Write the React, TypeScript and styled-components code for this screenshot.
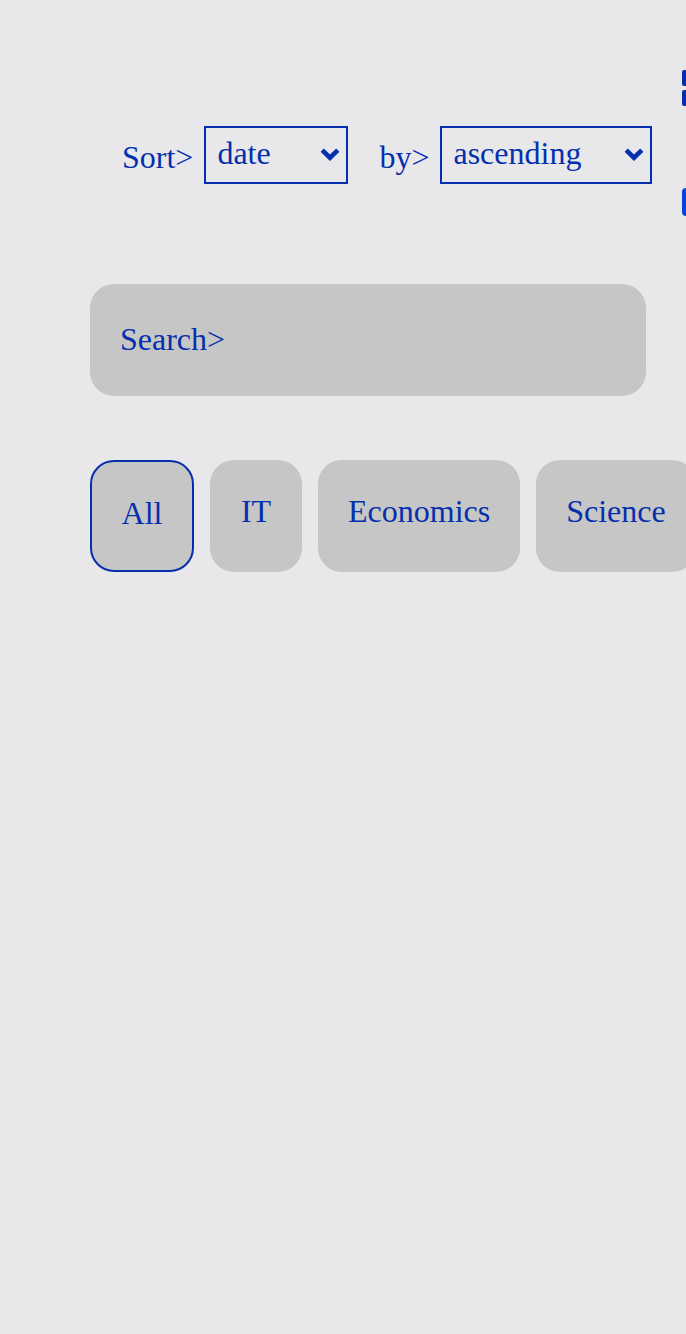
import React, { useState } from "react";
import styled, { createGlobalStyle, css } from "styled-components";

const ink = "#052fad";
const panel = "#c6c6c6";

const GlobalStyle = createGlobalStyle`
  *, *::before, *::after { box-sizing: border-box; }
  body {
    margin: 0;
    background: #e8e8ea;
    color: ${ink};
    font-family: "Liberation Serif", "Times New Roman", serif;
    font-size: 32px;
    line-height: 36px;
  }
  button, input, select { font: inherit; color: inherit; }
`;

const Page = styled.main`
  min-height: 100vh;
  overflow: hidden;
  padding: 70px 40px 40px 90px;
`;

const Toolbar = styled.div`
  display: flex;
  align-items: center;
  gap: 30px;
`;

const SortGroup = styled.div`
  display: flex;
  flex-shrink: 0;
  gap: 31px;
  padding-left: 32px;
`;

const Field = styled.div`
  display: flex;
  align-items: center;
  gap: 11px;
`;

const FieldLabel = styled.label`
  padding-top: 4px;
`;

const SelectBox = styled.div`
  position: relative;
`;

const Select = styled.select<{ $wide?: boolean }>`
  display: block;
  appearance: none;
  width: ${(p) => (p.$wide ? 212 : 144)}px;
  height: 58px;
  padding: 0 36px 4px 11px;
  border: 2px solid ${ink};
  border-radius: 0;
  background: transparent;
`;

const Chevron = styled.svg`
  position: absolute;
  top: 22px;
  right: 8px;
  pointer-events: none;
`;

const ViewTools = styled.div`
  display: flex;
  flex-direction: column;
  flex-shrink: 0;
  gap: 82px;
  padding-bottom: 24px;
`;

const GridButton = styled.button`
  display: block;
  padding: 0;
  border: 0;
  background: none;

  svg { display: block; }
`;

const AddButton = styled.button`
  width: 36px;
  height: 28px;
  padding: 0;
  border: 0;
  border-radius: 4px;
  background: #0048dc;
`;

const SearchInput = styled.input`
  display: block;
  width: 100%;
  height: 112px;
  margin-top: 44px;
  padding: 0 30px 2px;
  border: 0;
  border-radius: 24px;
  background: ${panel};

  &::placeholder { color: ${ink}; opacity: 1; }
`;

const Categories = styled.div`
  display: flex;
  gap: 16px;
  margin-top: 64px;
`;

const Category = styled.button<{ $active: boolean }>`
  display: flex;
  flex-shrink: 0;
  align-items: flex-start;
  justify-content: center;
  min-width: 92px;
  height: 112px;
  padding: 33px 30px;
  border: 0;
  border-radius: 24px;
  background: ${panel};

  ${(p) =>
    p.$active &&
    css`
      min-width: 104px;
      padding: 33px 28px;
      border: 2px solid ${ink};
    `}
`;

interface SortSelectProps {
  id: string;
  label: string;
  options: string[];
  wide?: boolean;
}

function SortSelect({ id, label, options, wide }: SortSelectProps) {
  return (
    <Field>
      <FieldLabel htmlFor={id}>{label}</FieldLabel>
      <SelectBox>
        <Select id={id} $wide={wide}>
          {options.map((option) => (
            <option key={option}>{option}</option>
          ))}
        </Select>
        <Chevron width="20" height="14" viewBox="0 0 20 14" aria-hidden="true">
          <path d="M2.2 2.2 L10 9.7 L17.8 2.2" fill="none" stroke={ink} strokeWidth="4.6" />
        </Chevron>
      </SelectBox>
    </Field>
  );
}

const categories = ["All", "IT", "Economics", "Science"];

export default function App() {
  const [active, setActive] = useState("All");

  return (
    <Page>
      <GlobalStyle />
      <Toolbar>
        <SortGroup>
          <SortSelect id="sort-key" label="Sort>" options={["date", "title"]} />
          <SortSelect id="sort-order" label="by>" options={["ascending", "descending"]} wide />
        </SortGroup>
        <ViewTools>
          <GridButton aria-label="Grid view">
            <svg width="36" height="36" viewBox="0 0 36 36" fill={ink} aria-hidden="true">
              <rect width="16" height="16" rx="2" />
              <rect x="20" width="16" height="16" rx="2" />
              <rect y="20" width="16" height="16" rx="2" />
              <rect x="20" y="20" width="16" height="16" rx="2" />
            </svg>
          </GridButton>
          <AddButton aria-label="Add" />
        </ViewTools>
      </Toolbar>
      <SearchInput type="text" aria-label="Search" placeholder="Search>" />
      <Categories>
        {categories.map((name) => (
          <Category key={name} $active={name === active} onClick={() => setActive(name)}>
            {name}
          </Category>
        ))}
      </Categories>
    </Page>
  );
}
